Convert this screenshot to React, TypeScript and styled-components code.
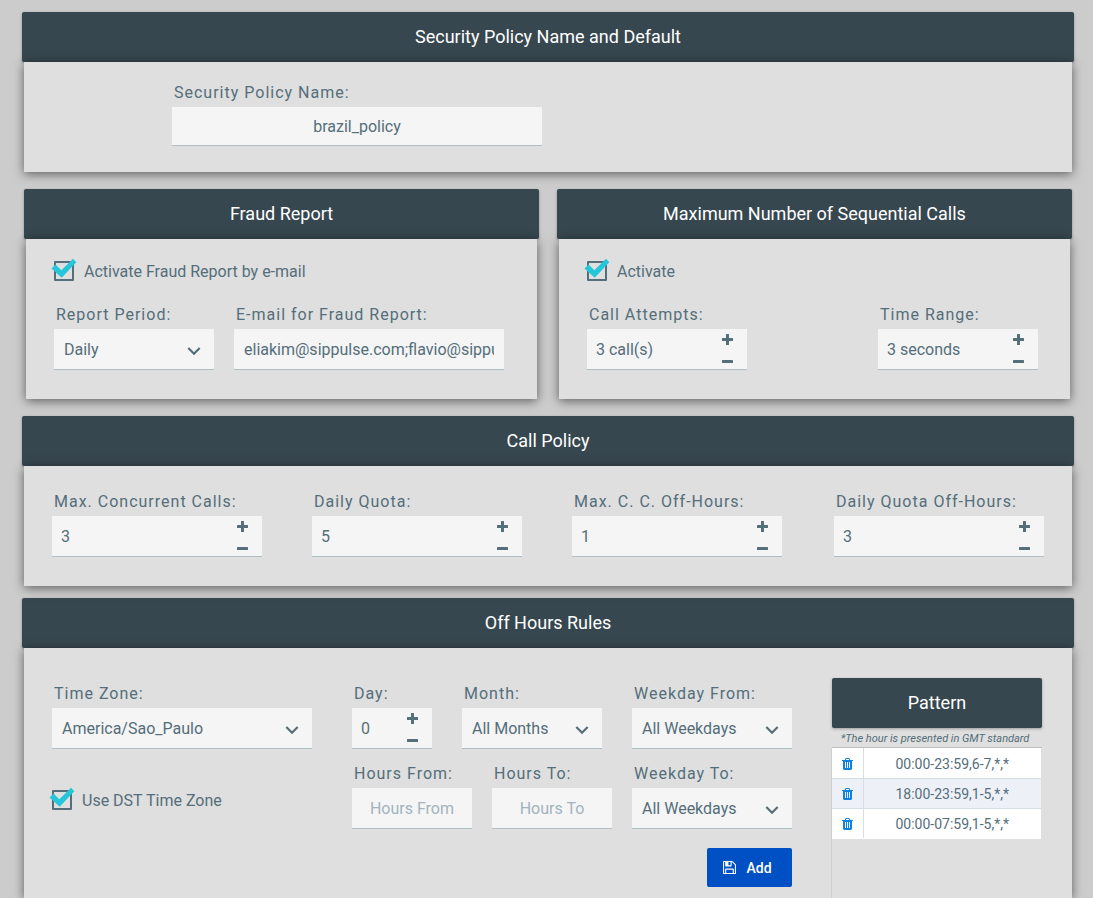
import React, { useId, useState } from "react";
import styled, { createGlobalStyle } from "styled-components";

const color = {
  page: "#cccccc",
  panel: "#dfdfdf",
  header: "#37474f",
  text: "#546e7a",
  field: "#f5f5f5",
  line: "#b0bec5",
  check: "#26c6da",
  primary: "#0050c5",
  trash: "#0c83e2",
};

const GlobalStyle = createGlobalStyle`
  *, *::before, *::after { box-sizing: border-box; }
  body {
    margin: 0;
    background: ${color.page};
    color: ${color.text};
    font: 400 16px/22px Roboto, "Liberation Sans", sans-serif;
  }
  input, select, button { font: inherit; color: inherit; }
`;

const Page = styled.main`
  display: flex;
  flex-direction: column;
  min-height: 100vh;
  padding: 12px 19px 0 22px;
`;

const Panel = styled.section<{ $space?: number; $fill?: boolean }>`
  display: flex;
  flex-direction: column;
  flex: ${(p) => (p.$fill ? "1 0 auto" : "none")};
  margin-bottom: ${(p) => p.$space ?? 0}px;
`;

const PanelRow = styled.div`
  display: grid;
  grid-template-columns: 1fr 1fr;
  gap: 18px;
  margin: 0 2px 17px;
`;

const PanelTitle = styled.h2`
  margin: 0;
  height: 50px;
  border-radius: 2px;
  background: ${color.header};
  color: #fff;
  font-size: 18px;
  font-weight: 400;
  line-height: 50px;
  text-align: center;
  box-shadow: 0 1px 3px rgba(0, 0, 0, 0.3);
`;

const PanelBody = styled.div<{ $pad: string }>`
  position: relative;
  display: grid;
  flex: 1;
  margin: 0 2px;
  padding: ${(p) => p.$pad};
  background: ${color.panel};
  box-shadow: 0 2px 10px rgba(0, 0, 0, 0.55);
`;

const FieldRow = styled.div<{ $gap?: number; $spread?: boolean }>`
  display: flex;
  gap: ${(p) => p.$gap ?? 20}px;
  justify-content: ${(p) => (p.$spread ? "space-between" : "flex-start")};
`;

const QuotaRow = styled(FieldRow)`
  & > :last-child {
    margin-left: auto;
  }
`;

const FieldBlock = styled.div<{ $width?: number }>`
  display: flex;
  flex-direction: column;
  gap: 3px;
  width: ${(p) => (p.$width ? `${p.$width}px` : "100%")};
`;

const Label = styled.label`
  padding-left: 2px;
  letter-spacing: 1px;
  white-space: nowrap;
`;

const Control = styled.div<{ $short?: boolean }>`
  display: grid;
  grid-template-columns: minmax(0, 1fr) 40px;
  height: ${(p) => (p.$short ? 39 : 41)}px;
  background: ${color.field};
  border-bottom: 1px solid ${color.line};
`;

const TextBox = styled.input<{ $center?: boolean; $wide?: boolean }>`
  grid-row: 1;
  grid-column: ${(p) => (p.$wide ? "1 / -1" : "1")};
  min-width: 0;
  width: 100%;
  padding: 2px 0 0;
  border: 0;
  border-left: ${(p) => (p.$wide ? 10 : 9)}px solid transparent;
  border-right: ${(p) => (p.$wide ? 10 : 0)}px solid transparent;
  background: transparent;
  outline: none;
  text-align: ${(p) => (p.$center ? "center" : "left")};
  &::placeholder {
    color: #a2b3bd;
    opacity: 1;
  }
`;

const SelectBox = styled.select`
  grid-row: 1;
  grid-column: 1 / -1;
  appearance: none;
  padding: 2px 40px 0 10px;
  border: 0;
  border-radius: 0;
  background: transparent;
  outline: none;
`;

const Chevron = styled.svg`
  grid-row: 1;
  grid-column: 2;
  place-self: center;
  width: 14px;
  height: 14px;
  margin-top: 4px;
  pointer-events: none;
`;

const StepButtons = styled.div`
  grid-row: 1;
  grid-column: 2;
  display: grid;
  grid-template-rows: 20px 16px;
  row-gap: 4px;
`;

const StepButton = styled.button`
  display: flex;
  align-items: center;
  justify-content: center;
  padding: 0;
  border: 0;
  background: none;
  cursor: pointer;
`;

const CheckRow = styled.label`
  display: flex;
  align-items: flex-start;
  gap: 10px;
  height: 20px;
`;

const CheckHolder = styled.span`
  display: grid;
  width: 20px;
  height: 20px;
  & > * {
    grid-area: 1 / 1;
  }
`;

const CheckInput = styled.input`
  appearance: none;
  width: 20px;
  height: 20px;
  margin: 0;
  border: 2px solid ${color.text};
  border-radius: 1px;
  &:not(:checked) + svg {
    visibility: hidden;
  }
`;

const CheckMark = styled.svg`
  width: 20px;
  height: 20px;
  overflow: visible;
  pointer-events: none;
`;

const FraudStack = styled.div`
  display: flex;
  flex-direction: column;
  gap: 23px;
`;

const RulesLayout = styled.div`
  display: flex;
  gap: 40px;
`;

const ZoneColumn = styled.div`
  display: flex;
  flex-direction: column;
  flex: 1;
  gap: 41px;
  padding-top: 35px;
`;

const RulesColumn = styled.div`
  display: flex;
  flex-direction: column;
  width: 440px;
  gap: 14px;
  padding-top: 35px;
`;

const AddButton = styled.button`
  display: flex;
  align-items: center;
  justify-content: center;
  align-self: flex-end;
  gap: 10px;
  width: 85px;
  height: 39px;
  margin-top: 5px;
  padding: 0 4px 0 0;
  border: 0;
  border-radius: 2px;
  background: ${color.primary};
  color: #fff;
  font-size: 14px;
  font-weight: 500;
  cursor: pointer;
`;

const PatternColumn = styled.div`
  display: flex;
  flex-direction: column;
  width: 210px;
  padding-top: 30px;
`;

const PatternNote = styled.p`
  margin: 0;
  height: 20px;
  padding-right: 4px;
  border-bottom: 1px solid #bdbdbd;
  font-size: 11px;
  font-style: italic;
  text-align: center;
  white-space: nowrap;
`;

const PatternArea = styled.div`
  flex: 1;
  margin-left: -1px;
  padding-right: 1px;
  border-left: 1px solid #d0d0d0;
`;

const PatternTable = styled.table`
  width: 100%;
  border-collapse: collapse;
  font-size: 14px;
  text-align: center;
  td {
    height: 30px;
    padding: 2px 0 0;
    background: #fff;
    border-bottom: 1px solid #d5dfe5;
  }
  td:first-child {
    width: 31px;
    border-right: 1px solid #d5dfe5;
  }
  tr:nth-child(even) td {
    background: #edf1f7;
  }
  tr:last-child td {
    border-bottom-color: #fff;
  }
`;

const TrashButton = styled.button`
  display: flex;
  align-items: center;
  justify-content: center;
  width: 100%;
  height: 27px;
  padding: 0;
  border: 0;
  background: none;
  color: ${color.trash};
  cursor: pointer;
`;

const PlusIcon = () => (
  <svg width="11" height="11" viewBox="0 0 11 11" fill="currentColor" aria-hidden="true">
    <path d="M4.6 0h1.8q.6 0 .6.6V4h3.4q.6 0 .6.6v1.8q0 .6-.6.6H7v3.400q0 .6-.6.6H4.600q-.6 0-.6-.6V7H.6Q0 7 0 6.400V4.600Q0 4 .6 4H4V.6Q4 0 4.600 0z" />
  </svg>
);

const MinusIcon = () => (
  <svg width="11" height="3" viewBox="0 0 11 3" fill="currentColor" aria-hidden="true">
    <rect width="11" height="3" rx="0.6" />
  </svg>
);

const SaveIcon = () => (
  <svg width="13" height="13" viewBox="0 128 1536 1536" fill="currentColor" aria-hidden="true">
    <path d="M384 1536h768v-384h-768v384zM1280 1536h128v-896q0-14-10-38.500t-20-34.500l-281-281q-10-10-34-20t-39-10v416q0 40-28 68t-68 28h-576q-40 0-68-28t-28-68v-416h-128v1280h128v-416q0-40 28-68t68-28h832q40 0 68 28t28 68v416zM896 608v-320q0-13-9.500-22.500t-22.500-9.500h-192q-13 0-22.500 9.500t-9.500 22.500v320q0 13 9.500 22.500t22.500 9.500h192q13 0 22.500-9.500t9.500-22.500zM1536 640v928q0 40-28 68t-68 28h-1344q-40 0-68-28t-28-68v-1344q0-40 28-68t68-28h928q40 0 88 20t76 48l280 280q28 28 48 76t20 88z" />
  </svg>
);

const TrashIcon = () => (
  <svg width="11" height="12" viewBox="0 128 1408 1536" fill="currentColor" aria-hidden="true">
    <path d="M512 1376v-704q0-14-9-23t-23-9h-64q-14 0-23 9t-9 23v704q0 14 9 23t23 9h64q14 0 23-9t9-23zM768 1376v-704q0-14-9-23t-23-9h-64q-14 0-23 9t-9 23v704q0 14 9 23t23 9h64q14 0 23-9t9-23zM1024 1376v-704q0-14-9-23t-23-9h-64q-14 0-23 9t-9 23v704q0 14 9 23t23 9h64q14 0 23-9t9-23zM480 384h448l-48-117q-7-9-17-11h-317q-10 2-17 11zM1408 416v64q0 14-9 23t-23 9h-96v948q0 83-47 143.500t-113 60.500h-832q-66 0-113-58.500t-47-141.500v-952h-96q-14 0-23-9t-9-23v-64q0-14 9-23t23-9h309l70-167q15-37 54-63t79-26h320q40 0 79 26t54 63l70 167h309q14 0 23 9t9 23z" />
  </svg>
);

type FieldProps = {
  label: string;
  width?: number;
  value?: string;
  placeholder?: string;
};

function TextField({ label, width, value = "", placeholder, center, short }: FieldProps & { center?: boolean; short?: boolean }) {
  const id = useId();
  return (
    <FieldBlock $width={width}>
      <Label htmlFor={id}>{label}</Label>
      <Control $short={short}>
        <TextBox id={id} $wide $center={center} defaultValue={value} placeholder={placeholder} />
      </Control>
    </FieldBlock>
  );
}

function SelectField({ label, width, value }: FieldProps) {
  const id = useId();
  return (
    <FieldBlock $width={width}>
      <Label htmlFor={id}>{label}</Label>
      <Control>
        <SelectBox id={id} defaultValue={value}>
          <option>{value}</option>
        </SelectBox>
        <Chevron viewBox="0 0 14 14" fill="none" stroke="currentColor" strokeWidth="2.2" aria-hidden="true">
          <path d="M1.300 4l5.700 5.700L12.700 4" />
        </Chevron>
      </Control>
    </FieldBlock>
  );
}

function StepField({ label, width, start, unit = "" }: { label: string; width: number; start: number; unit?: string }) {
  const id = useId();
  const [count, setCount] = useState(start);
  return (
    <FieldBlock $width={width}>
      <Label htmlFor={id}>{label}</Label>
      <Control>
        <TextBox id={id} value={`${count}${unit}`} readOnly />
        <StepButtons>
          <StepButton type="button" aria-label={`Increase ${label}`} onClick={() => setCount(count + 1)}>
            <PlusIcon />
          </StepButton>
          <StepButton type="button" aria-label={`Decrease ${label}`} onClick={() => setCount(Math.max(0, count - 1))}>
            <MinusIcon />
          </StepButton>
        </StepButtons>
      </Control>
    </FieldBlock>
  );
}

function CheckField({ label }: { label: string }) {
  return (
    <CheckRow>
      <CheckHolder>
        <CheckInput type="checkbox" defaultChecked />
        <CheckMark viewBox="0 0 20 20" fill={color.check} aria-hidden="true">
          <path d="M-2.500 7.500L1.500 3.500L7.300 9.200L19 -2.300L22.300 1.200L7.700 16.800Z" />
        </CheckMark>
      </CheckHolder>
      {label}
    </CheckRow>
  );
}

const patterns = ["00:00-23:59,6-7,*,*", "18:00-23:59,1-5,*,*", "00:00-07:59,1-5,*,*"];

export default function App() {
  return (
    <>
      <GlobalStyle />
      <Page>
        <Panel $space={17}>
          <PanelTitle>Security Policy Name and Default</PanelTitle>
          <PanelBody $pad="20px 28px 26px 148px">
            <TextField label="Security Policy Name:" width={370} value="brazil_policy" center short />
          </PanelBody>
        </Panel>

        <PanelRow>
          <Panel>
            <PanelTitle>Fraud Report</PanelTitle>
            <PanelBody $pad="22px 28px 29px">
              <FraudStack>
                <CheckField label="Activate Fraud Report by e-mail" />
                <FieldRow>
                  <SelectField label="Report Period:" width={160} value="Daily" />
                  <TextField
                    label="E-mail for Fraud Report:"
                    width={270}
                    value="eliakim@sippulse.com;flavio@sippulse.com"
                  />
                </FieldRow>
              </FraudStack>
            </PanelBody>
          </Panel>
          <Panel>
            <PanelTitle>Maximum Number of Sequential Calls</PanelTitle>
            <PanelBody $pad="22px 32px 29px 28px">
              <FraudStack>
                <CheckField label="Activate" />
                <FieldRow $spread>
                  <StepField label="Call Attempts:" width={160} start={3} unit=" call(s)" />
                  <StepField label="Time Range:" width={160} start={3} unit=" seconds" />
                </FieldRow>
              </FraudStack>
            </PanelBody>
          </Panel>
        </PanelRow>

        <Panel $space={12}>
          <PanelTitle>Call Policy</PanelTitle>
          <PanelBody $pad="25px 28px 29px">
            <QuotaRow $gap={50}>
              <StepField label="Max. Concurrent Calls:" width={210} start={3} />
              <StepField label="Daily Quota:" width={210} start={5} />
              <StepField label="Max. C. C. Off-Hours:" width={210} start={1} />
              <StepField label="Daily Quota Off-Hours:" width={210} start={3} />
            </QuotaRow>
          </PanelBody>
        </Panel>

        <Panel $fill>
          <PanelTitle>Off Hours Rules</PanelTitle>
          <PanelBody $pad="0 30px 0 28px">
            <RulesLayout>
              <ZoneColumn>
                <SelectField label="Time Zone:" value="America/Sao_Paulo" />
                <CheckField label="Use DST Time Zone" />
              </ZoneColumn>
              <RulesColumn>
                <FieldRow $gap={30}>
                  <StepField label="Day:" width={80} start={0} />
                  <SelectField label="Month:" width={140} value="All Months" />
                  <SelectField label="Weekday From:" width={160} value="All Weekdays" />
                </FieldRow>
                <FieldRow>
                  <TextField label="Hours From:" width={120} placeholder="Hours From" center />
                  <TextField label="Hours To:" width={120} placeholder="Hours To" center />
                  <SelectField label="Weekday To:" width={160} value="All Weekdays" />
                </FieldRow>
                <AddButton type="button">
                  <SaveIcon />
                  Add
                </AddButton>
              </RulesColumn>
              <PatternColumn>
                <PanelTitle as="h3">Pattern</PanelTitle>
                <PatternNote>*The hour is presented in GMT standard</PatternNote>
                <PatternArea>
                  <PatternTable>
                    <tbody>
                      {patterns.map((pattern) => (
                        <tr key={pattern}>
                          <td>
                            <TrashButton type="button" aria-label={`Delete ${pattern}`}>
                              <TrashIcon />
                            </TrashButton>
                          </td>
                          <td>{pattern}</td>
                        </tr>
                      ))}
                    </tbody>
                  </PatternTable>
                </PatternArea>
              </PatternColumn>
            </RulesLayout>
          </PanelBody>
        </Panel>
      </Page>
    </>
  );
}
